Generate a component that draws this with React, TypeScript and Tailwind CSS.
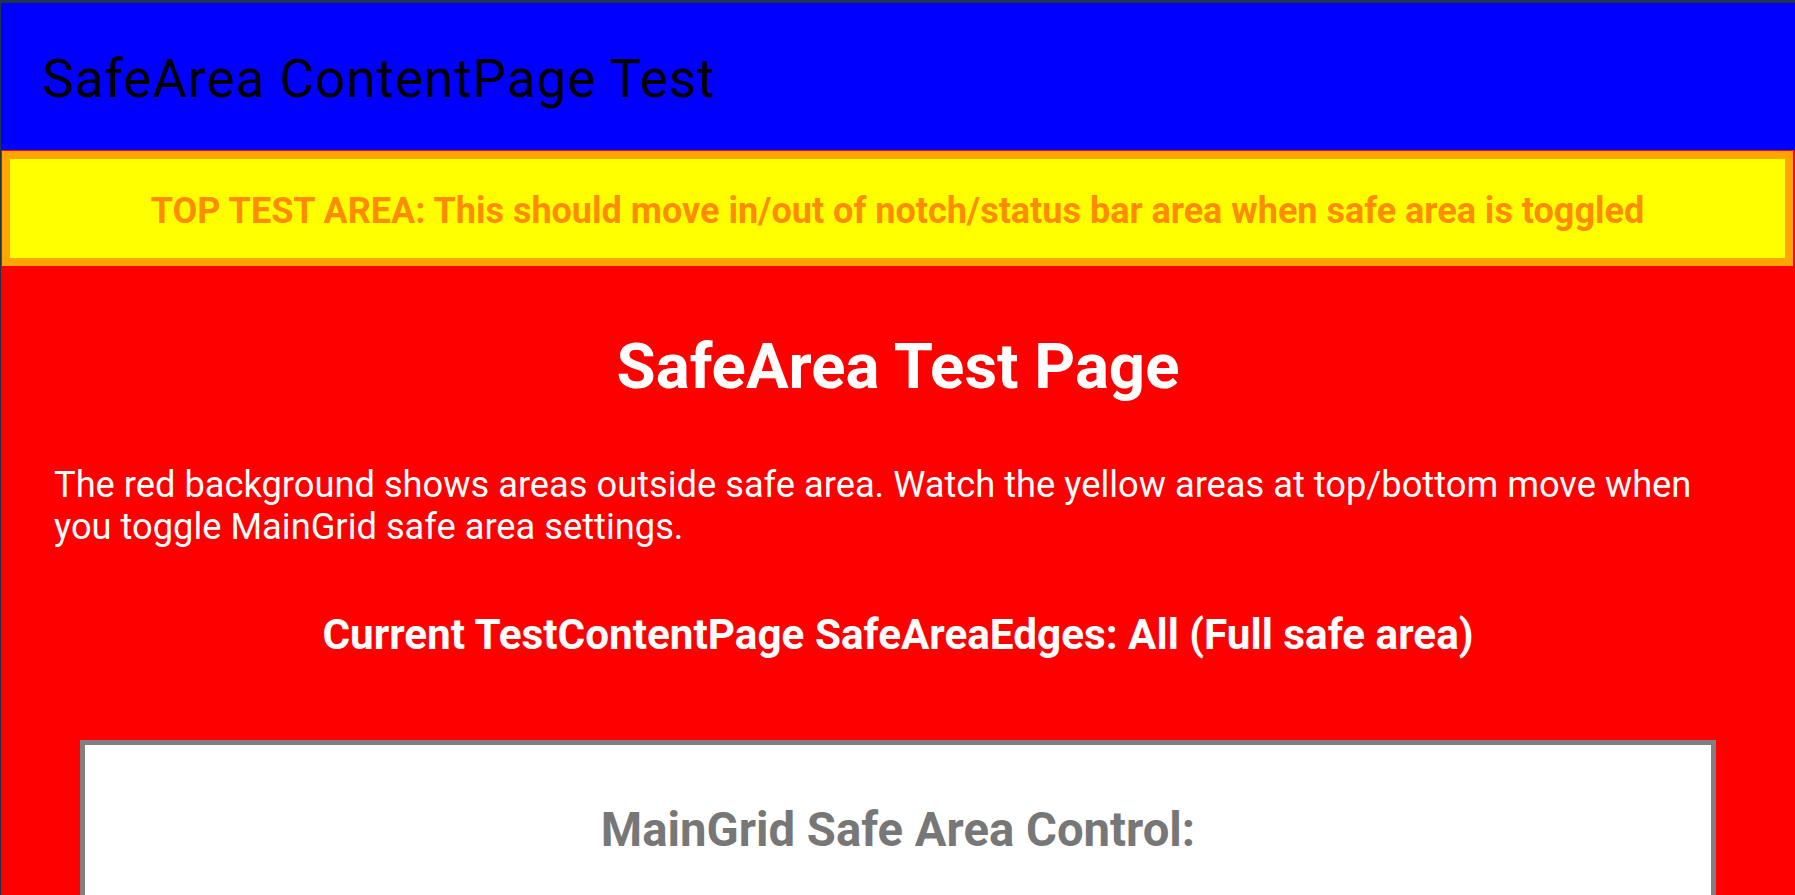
export default function App() {
  return (
    <div className="h-screen overflow-hidden bg-[#ff0000] border-t-[3px] border-l border-[#203448] font-['Roboto',sans-serif]">
      {/* navigation bar */}
      <header className="h-[147px] bg-[#0000ff] pl-[41px] pt-[46px]">
        <h1 className="text-[53px] leading-[61.5px] tracking-[1px] text-black font-normal">SafeArea ContentPage Test</h1>
      </header>

      {/* top test area */}
      <div className="mt-[1px] ml-[1px] mr-[2px] border-[8px] border-[#ffa500] bg-[#ffff00] pt-[31px] pb-[25px]">
        <p className="text-center text-[36px] leading-[43px] font-bold text-[#ff8c00]">
          TOP TEST AREA: This should move in/out of notch/status bar area when safe area is toggled
        </p>
      </div>

      <main className="px-[53px]">
        <h2 className="mt-[64px] text-center text-[63.5px] leading-[74px] font-bold text-white">SafeArea Test Page</h2>
        <p className="mt-[60px] text-[36.25px] leading-[42px] text-white">
          The red background shows areas outside safe area. Watch the yellow areas at top/bottom move when you toggle MainGrid safe area settings.
        </p>
        <p className="mt-[62px] text-center text-[42.25px] leading-[49px] font-bold text-white">
          Current TestContentPage SafeAreaEdges: All (Full safe area)
        </p>

        <section className="mt-[81px] mx-[26px] min-h-[400px] border-[5px] border-[#808080] bg-white pt-[58px]">
          <h3 className="text-center text-[47.25px] leading-[55px] font-bold text-[#777777]">MainGrid Safe Area Control:</h3>
        </section>
      </main>
    </div>
  );
}
